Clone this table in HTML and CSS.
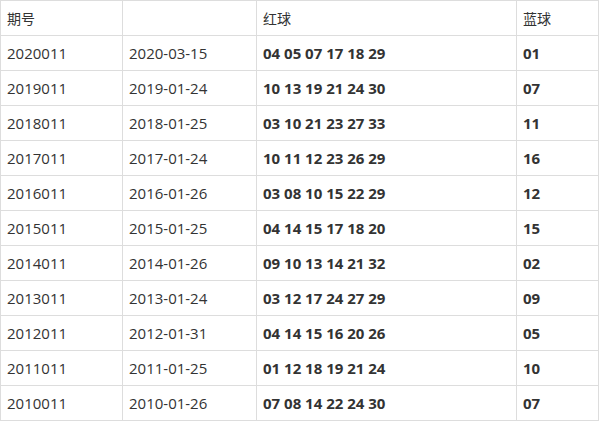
FILE: index.html
```html
<!DOCTYPE html>
<html lang="zh">
<head>
<meta charset="utf-8">
<title>双色球</title>
<link rel="stylesheet" href="styles.css">
</head>
<body>
<table class="draws">
  <colgroup>
    <col class="c-issue"><col class="c-date"><col class="c-red"><col class="c-blue">
  </colgroup>
  <thead>
    <tr><th>期号</th><th></th><th>红球</th><th>蓝球</th></tr>
  </thead>
  <tbody>
    <tr><td>2020011</td><td>2020-03-15</td><td class="num">04 05 07 17 18 29</td><td class="num">01</td></tr>
    <tr><td>2019011</td><td>2019-01-24</td><td class="num">10 13 19 21 24 30</td><td class="num">07</td></tr>
    <tr><td>2018011</td><td>2018-01-25</td><td class="num">03 10 21 23 27 33</td><td class="num">11</td></tr>
    <tr><td>2017011</td><td>2017-01-24</td><td class="num">10 11 12 23 26 29</td><td class="num">16</td></tr>
    <tr><td>2016011</td><td>2016-01-26</td><td class="num">03 08 10 15 22 29</td><td class="num">12</td></tr>
    <tr><td>2015011</td><td>2015-01-25</td><td class="num">04 14 15 17 18 20</td><td class="num">15</td></tr>
    <tr><td>2014011</td><td>2014-01-26</td><td class="num">09 10 13 14 21 32</td><td class="num">02</td></tr>
    <tr><td>2013011</td><td>2013-01-24</td><td class="num">03 12 17 24 27 29</td><td class="num">09</td></tr>
    <tr><td>2012011</td><td>2012-01-31</td><td class="num">04 14 15 16 20 26</td><td class="num">05</td></tr>
    <tr><td>2011011</td><td>2011-01-25</td><td class="num">01 12 18 19 21 24</td><td class="num">10</td></tr>
    <tr><td>2010011</td><td>2010-01-26</td><td class="num">07 08 14 22 24 30</td><td class="num">07</td></tr>
  </tbody>
</table>
</body>
</html>
```
FILE: styles.css
```css
html, body {
  margin: 0;
  padding: 0;
  background: #fff;
}
body {
  font-family: "Open Sans", "Noto Sans CJK SC", sans-serif;
  font-size: 15px;
  color: #333;
}
.draws {
  border-collapse: collapse;
  table-layout: fixed;
  width: 598px;
}
.c-issue { width: 122px; }
.c-date { width: 134px; }
.c-red { width: 260px; }
.c-blue { width: 82px; }
.draws th,
.draws td {
  border: 1px solid #ddd;
  height: 35px;
  padding: 0 6px;
  text-align: left;
  vertical-align: middle;
  font-weight: normal;
  white-space: nowrap;
  box-sizing: border-box;
}
.draws th {
  font-family: "Noto Sans CJK SC", sans-serif;
  font-size: 14px;
}
.draws td.num {
  font-weight: bold;
}
```
